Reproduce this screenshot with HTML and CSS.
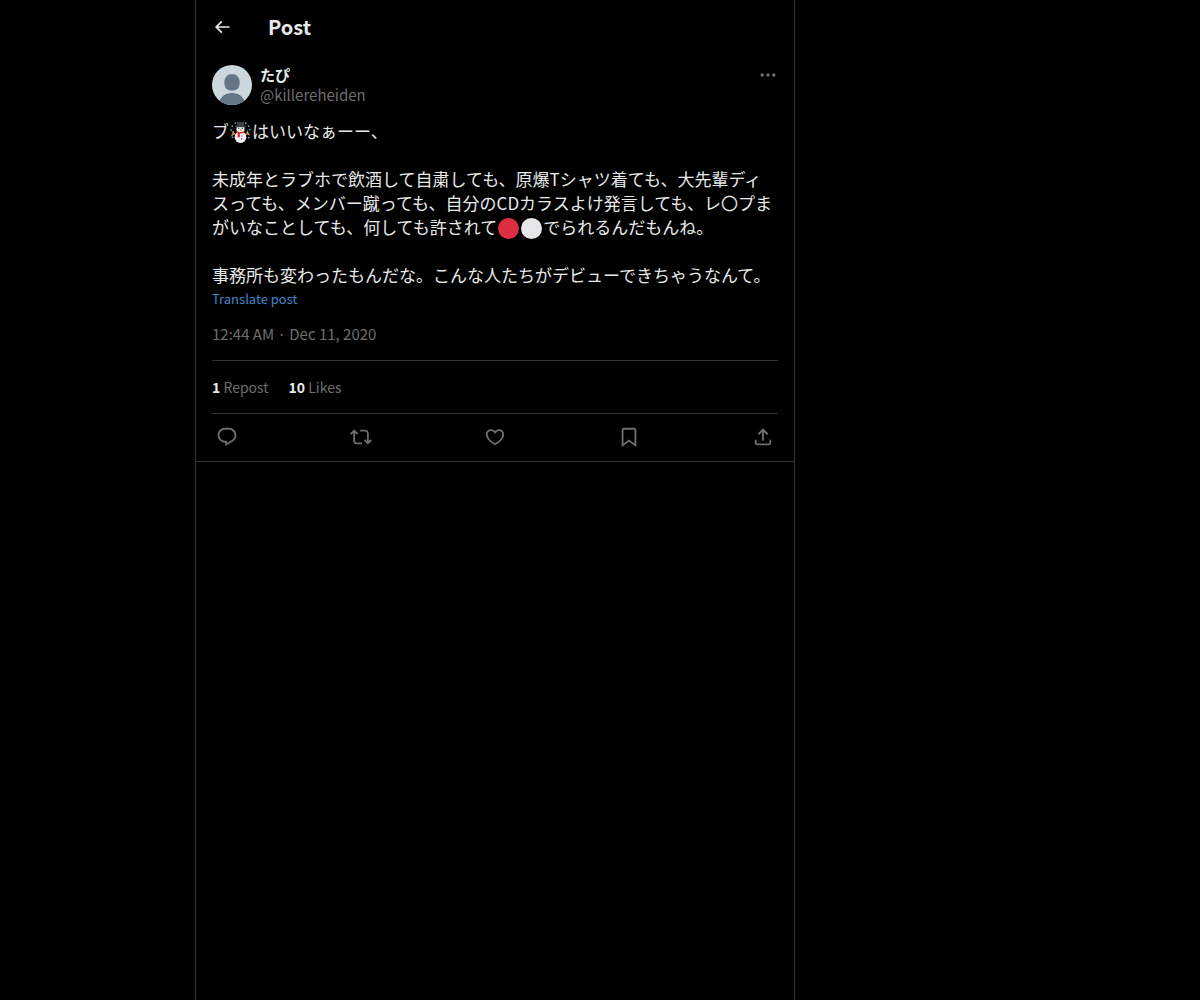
FILE: index.html
```html
<!DOCTYPE html>
<html lang="en">
<head>
  <meta charset="UTF-8">
  <meta name="viewport" content="width=device-width, initial-scale=1.0">
  <title>Post</title>
  <link rel="stylesheet" href="styles.css">
</head>
<body>
  <main class="column">
    <header class="topbar">
      <button class="icon-btn back" type="button" aria-label="Back">
        <svg viewBox="0 0 24 24"><path d="M7.414 13l5.043 5.04-1.414 1.42L3.586 12l7.457-7.46 1.414 1.42L7.414 11H21v2H7.414z"/></svg>
      </button>
      <h1>Post</h1>
    </header>

    <article class="post">
      <div class="author">
        <svg class="avatar" viewBox="0 0 40 40" role="img" aria-label="Avatar">
          <clipPath id="avatar-clip"><circle cx="20" cy="20" r="20"/></clipPath>
          <g clip-path="url(#avatar-clip)">
            <rect width="40" height="40" fill="#ccd6dd"/>
            <path fill="#657786" d="M20 9c4.500 0 7.700 3.300 7.700 8.500 0 5-2.200 8.100-7.700 8.100s-7.700-3.100-7.700-8.100C12.300 12.300 15.500 9 20 9z"/>
            <path fill="#657786" d="M6 40c2-8 6.500-12 14-12s12 4 14 12z"/>
          </g>
        </svg>
        <div class="names">
          <a class="name" href="#" lang="ja">たぴ</a>
          <a class="handle" href="#">@killereheiden</a>
        </div>
        <button class="icon-btn more" type="button" aria-label="More">
          <svg viewBox="0 0 24 24"><path d="M3 12c0-1.100.900-2 2-2s2 .900 2 2-.900 2-2 2-2-.900-2-2zm9 2c1.100 0 2-.900 2-2s-.900-2-2-2-2 .900-2 2 .900 2 2 2zm7 0c1.100 0 2-.900 2-2s-.900-2-2-2-2 .900-2 2 .900 2 2 2z"/></svg>
        </button>
      </div>

      <div class="text" lang="ja">
        <p>ブ<svg class="emoji" viewBox="0 0 36 36" role="img" aria-label="Snowman">
          <g fill="#5c9fb5">
            <circle cx="4" cy="7" r="1.600"/><circle cx="9" cy="2" r="1.500"/><circle cx="32" cy="7" r="1.600"/><circle cx="27" cy="2" r="1.500"/>
            <circle cx="2" cy="14" r="1.500"/><circle cx="34" cy="13" r="1.500"/><circle cx="4" cy="26" r="1.600"/><circle cx="32" cy="27" r="1.600"/>
          </g>
          <path fill="none" stroke="#e0a040" stroke-width="2" stroke-linecap="round" d="M11 22l-7-3m3 1l-2-4m2 4l-4 3M25 22l7-3m-3 1l1-4m-1 4l4 2"/>
          <circle cx="18" cy="26" r="10" fill="#f0f2f3"/>
          <circle cx="18" cy="12" r="7" fill="#f5f8fa"/>
          <path fill="#414042" d="M12 0h12v6h3v3H9V6h3z"/>
          <path fill="#dd2e44" d="M11 15c4 3 10 3 14 0v3c-2 1-5 2-8 2v6h-4v-8l-2-1z"/>
          <path fill="#f4900c" d="M17 12l5 2-5 1z"/>
          <g fill="#292f33"><circle cx="15" cy="11" r="1"/><circle cx="21" cy="11" r="1"/><circle cx="20" cy="24" r="1"/><circle cx="20" cy="29" r="1"/></g>
        </svg>はいいなぁーー、</p>
        <p>未成年とラブホで飲酒して自粛しても、原爆Tシャツ着ても、大先輩ディスっても、メンバー蹴っても、自分のCDカラスよけ発言しても、レ〇プまがいなことしても、何しても許されて<svg class="emoji" viewBox="0 0 36 36" role="img" aria-label="Red circle"><circle cx="18" cy="18" r="18" fill="#dd2e44"/></svg><svg class="emoji" viewBox="0 0 36 36" role="img" aria-label="White circle"><circle cx="18" cy="18" r="18" fill="#e6e7e8"/></svg>でられるんだもんね。</p>
        <p>事務所も変わったもんだな。こんな人たちがデビューできちゃうなんて。</p>
      </div>
      <button class="translate" type="button">Translate post</button>

      <div class="date"><a href="#">12:44 AM · Dec 11, 2020</a></div>

      <div class="stats">
        <a href="#"><strong>1</strong> Repost</a>
        <a href="#"><strong>10</strong> Likes</a>
      </div>

      <div class="actions">
        <button class="icon-btn" type="button" aria-label="Reply">
          <svg viewBox="0 0 24 24"><path d="M1.751 10c0-4.420 3.584-8 8.005-8h4.366c4.490 0 8.129 3.640 8.129 8.130 0 2.960-1.607 5.680-4.196 7.110l-8.054 4.460v-3.690h-.067c-4.490.100-8.183-3.510-8.183-8.010zm8.005-6c-3.317 0-6.005 2.690-6.005 6 0 3.370 2.770 6.080 6.138 6.010l.351-.010h1.761v2.300l5.087-2.810c1.951-1.080 3.163-3.130 3.163-5.360 0-3.390-2.744-6.130-6.129-6.130H9.756z"/></svg>
        </button>
        <button class="icon-btn" type="button" aria-label="Repost">
          <svg viewBox="0 0 24 24"><path d="M4.500 3.880l4.432 4.140-1.364 1.460L5.500 7.550V16c0 1.100.896 2 2 2H13v2H7.500c-2.209 0-4-1.790-4-4V7.550L1.432 9.480.068 8.020 4.500 3.880zM16.500 6H11V4h5.500c2.209 0 4 1.790 4 4v8.450l2.068-1.930 1.364 1.460-4.432 4.140-4.432-4.140 1.364-1.460 2.068 1.930V8c0-1.100-.896-2-2-2z"/></svg>
        </button>
        <button class="icon-btn" type="button" aria-label="Like">
          <svg viewBox="0 0 24 24"><path d="M16.697 5.500c-1.222-.060-2.679.510-3.890 2.160l-.805 1.090-.806-1.090C9.984 6.010 8.526 5.440 7.304 5.500c-1.243.070-2.349.780-2.910 1.910-.552 1.120-.633 2.780.479 4.820 1.074 1.970 3.257 4.270 7.129 6.610 3.870-2.340 6.052-4.640 7.126-6.610 1.111-2.040 1.030-3.700.477-4.820-.561-1.130-1.666-1.840-2.908-1.910zm4.187 7.690c-1.351 2.480-4.001 5.120-8.379 7.670l-.503.300-.504-.300c-4.379-2.550-7.029-5.190-8.382-7.670-1.360-2.500-1.410-4.860-.514-6.670.887-1.790 2.647-2.910 4.601-3.010 1.651-.090 3.368.560 4.798 2.010 1.429-1.450 3.146-2.100 4.796-2.010 1.954.100 3.714 1.220 4.601 3.010.896 1.810.846 4.170-.514 6.670z"/></svg>
        </button>
        <button class="icon-btn" type="button" aria-label="Bookmark">
          <svg viewBox="0 0 24 24"><path d="M4 4.500C4 3.120 5.119 2 6.500 2h11C18.881 2 20 3.120 20 4.500v18.440l-8-5.710-8 5.710V4.500zM6.500 4c-.276 0-.500.220-.500.500v14.560l6-4.290 6 4.290V4.500c0-.280-.224-.500-.500-.500h-11z"/></svg>
        </button>
        <button class="icon-btn" type="button" aria-label="Share">
          <svg viewBox="0 0 24 24"><path d="M12 2.590l5.700 5.700-1.410 1.420L13 6.410V16h-2V6.410l-3.300 3.300-1.410-1.420L12 2.590zM21 15l-.020 3.510c0 1.380-1.120 2.490-2.500 2.490H5.500C4.110 21 3 19.880 3 18.500V15h2v3.500c0 .280.220.500.500.500h12.980c.280 0 .500-.220.500-.500L19 15h2z"/></svg>
        </button>
      </div>
    </article>
  </main>
</body>
</html>
```
FILE: styles.css
```css
:root {
  --text: #e7e9ea;
  --muted: #6e6e6e;
  --line: #333333;
  --link: #4088cc;
}
* {
  margin: 0;
  padding: 0;
  box-sizing: border-box;
}
body {
  display: grid;
  grid-template-columns: 13fr minmax(0, 600px) 27fr;
  min-height: 100vh;
  background: #000;
  color: var(--text);
  font-family: "Noto Sans CJK JP", "Noto Sans", sans-serif;
  font-size: 15px;
  line-height: 20px;
}
a {
  color: inherit;
  text-decoration: none;
}
button {
  background: none;
  border: none;
  font: inherit;
  cursor: pointer;
}
.column {
  grid-column: 2;
  border-left: 1px solid var(--line);
  border-right: 1px solid var(--line);
}
.topbar {
  display: flex;
  align-items: center;
  gap: 36px;
  height: 53px;
  padding: 0 16px;
}
.topbar h1 {
  font-size: 20px;
  line-height: 24px;
}
.icon-btn {
  display: flex;
  color: var(--muted);
}
.icon-btn svg {
  display: block;
  width: 22px;
  height: 22px;
  fill: currentColor;
}
.back { color: var(--text); }
.back svg,
.more svg {
  width: 20px;
  height: 20px;
}
.post {
  padding: 12px 16px 0;
  border-bottom: 1px solid var(--line);
}
.author {
  display: flex;
  align-items: flex-start;
  gap: 8px;
  margin-bottom: 14px;
}
.avatar {
  width: 40px;
  height: 40px;
  flex-shrink: 0;
}
.names {
  display: flex;
  flex-direction: column;
  flex: 1;
}
.name { font-weight: 700; }
.handle { color: var(--muted); }
.text {
  display: flex;
  flex-direction: column;
  gap: 24px;
  font-size: 17px;
  line-height: 24px;
}
.emoji {
  width: 21px;
  height: 21px;
  margin: 0 1px;
  vertical-align: -5px;
}
.translate {
  display: block;
  color: var(--link);
  font-size: 13px;
  line-height: 24px;
}
.date {
  padding: 13px 0 16px;
  color: var(--muted);
  border-bottom: 1px solid var(--line);
}
.stats {
  display: flex;
  gap: 20px;
  padding: 16px 0;
  color: var(--muted);
  font-size: 14px;
  border-bottom: 1px solid var(--line);
}
.stats strong { color: var(--text); }
.actions {
  display: flex;
  justify-content: space-between;
  padding: 12px 4px 13px;
}
```
